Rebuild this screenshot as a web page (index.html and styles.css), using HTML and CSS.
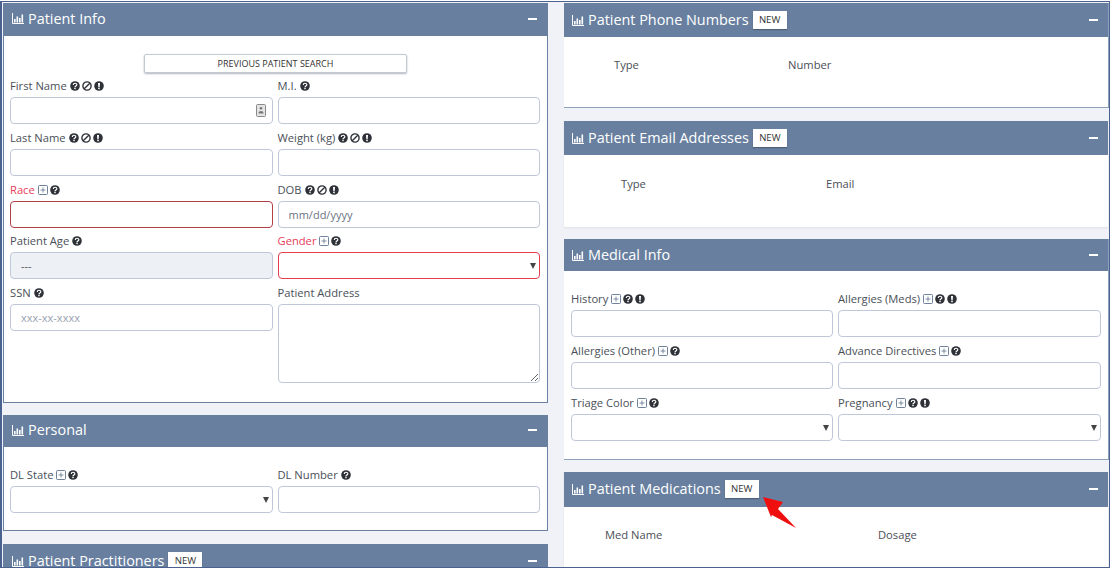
FILE: index.html
```html
<!DOCTYPE html>
<html lang="en">
<head>
<meta charset="utf-8">
<title>Patient</title>
<link rel="stylesheet" href="styles.css">
</head>
<body>
<svg class="defs" width="0" height="0" aria-hidden="true">
  <symbol id="i-chart" viewBox="0 0 12 11">
    <path d="M0.5 0v10.5H12" fill="none" stroke="currentColor"/>
    <path d="M2 6h1.6v3.5H2zM4.5 3.5h1.6v6H4.5zM7 5h1.6v4.5H7zM9.5 1.5h1.6v8H9.5z" fill="currentColor"/>
  </symbol>
  <symbol id="i-q" viewBox="0 0 10 10">
    <circle cx="5" cy="5" r="4.8" fill="currentColor"/>
    <path d="M3.3 3.9c0-2.2 3.5-2.2 3.5-.1 0 1.3-1.8 1.2-1.8 2.5" fill="none" stroke="#fff" stroke-width="1.2"/>
    <rect x="4.3" y="6.8" width="1.4" height="1.4" fill="#fff"/>
  </symbol>
  <symbol id="i-ban" viewBox="0 0 10 10">
    <circle cx="5" cy="5" r="4.1" fill="none" stroke="currentColor" stroke-width="1.4"/>
    <path d="M2.2 7.8 7.8 2.2" stroke="currentColor" stroke-width="1.4"/>
  </symbol>
  <symbol id="i-ex" viewBox="0 0 10 10">
    <circle cx="5" cy="5" r="4.8" fill="currentColor"/>
    <path d="M4 1.9h2L5.7 6H4.3z" fill="#fff"/>
    <rect x="4.2" y="6.6" width="1.6" height="1.6" fill="#fff"/>
  </symbol>
  <symbol id="i-plus" viewBox="0 0 10 10">
    <rect x="0.5" y="0.5" width="9" height="9" rx="1" fill="none" stroke="currentColor" stroke-width="0.9"/>
    <path d="M2.5 5h5M5 2.5v5" stroke="currentColor" stroke-width="0.8"/>
  </symbol>
</svg>

<div class="frame">
  <div class="columns">
    <div class="column">
      <section class="panel panel-boxed gap-12">
        <header class="panel-head head-33 head-lift">
          <svg class="chart"><use href="#i-chart"/></svg>
          <h2 class="panel-title">Patient Info</h2>
          <span class="collapse"></span>
        </header>
        <div class="panel-body body-info">
          <div class="btn-row"><button class="btn-prev" type="button">PREVIOUS PATIENT SEARCH</button></div>
          <div class="form-grid">
            <div class="field">
              <label class="field-label">First Name <svg class="ico"><use href="#i-q"/></svg><svg class="ico"><use href="#i-ban"/></svg><svg class="ico"><use href="#i-ex"/></svg></label>
              <div class="input-wrap">
                <input class="input" type="text">
                <svg class="contact" viewBox="0 0 10 13"><rect x="0.5" y="0.5" width="9" height="12" rx="1" fill="#e4e4e4" stroke="#8a8a8a"/><circle cx="5" cy="4.3" r="1.3" fill="#777"/><path d="M2.5 9.5c0-3.2 5-3.2 5 0z" fill="#777"/></svg>
              </div>
            </div>
            <div class="field">
              <label class="field-label">M.I. <svg class="ico"><use href="#i-q"/></svg></label>
              <input class="input" type="text">
            </div>
            <div class="field">
              <label class="field-label">Last Name <svg class="ico"><use href="#i-q"/></svg><svg class="ico"><use href="#i-ban"/></svg><svg class="ico"><use href="#i-ex"/></svg></label>
              <input class="input" type="text">
            </div>
            <div class="field">
              <label class="field-label">Weight (kg) <svg class="ico"><use href="#i-q"/></svg><svg class="ico"><use href="#i-ban"/></svg><svg class="ico"><use href="#i-ex"/></svg></label>
              <input class="input" type="text">
            </div>
            <div class="field">
              <label class="field-label label-req">Race <svg class="ico ico-plus"><use href="#i-plus"/></svg><svg class="ico"><use href="#i-q"/></svg></label>
              <input class="input input-err-dark" type="text">
            </div>
            <div class="field">
              <label class="field-label">DOB <svg class="ico"><use href="#i-q"/></svg><svg class="ico"><use href="#i-ban"/></svg><svg class="ico"><use href="#i-ex"/></svg></label>
              <input class="input input-date" type="text" value="mm/dd/yyyy">
            </div>
            <div class="field">
              <label class="field-label">Patient Age <svg class="ico"><use href="#i-q"/></svg></label>
              <input class="input input-off" type="text" value="---" disabled>
            </div>
            <div class="field">
              <label class="field-label label-req">Gender <svg class="ico ico-plus"><use href="#i-plus"/></svg><svg class="ico"><use href="#i-q"/></svg></label>
              <div class="select-wrap"><select class="input input-err"><option></option></select></div>
            </div>
            <div class="field">
              <label class="field-label">SSN <svg class="ico"><use href="#i-q"/></svg></label>
              <input class="input" type="text" placeholder="xxx-xx-xxxx">
            </div>
            <div class="field">
              <label class="field-label">Patient Address</label>
              <textarea class="input textarea"></textarea>
            </div>
          </div>
        </div>
      </section>

      <section class="panel panel-boxed gap-13">
        <header class="panel-head head-32 head-lift">
          <svg class="chart"><use href="#i-chart"/></svg>
          <h2 class="panel-title">Personal</h2>
          <span class="collapse"></span>
        </header>
        <div class="panel-body body-personal">
          <div class="form-grid">
            <div class="field">
              <label class="field-label">DL State <svg class="ico ico-plus"><use href="#i-plus"/></svg><svg class="ico"><use href="#i-q"/></svg></label>
              <div class="select-wrap"><select class="input"><option></option></select></div>
            </div>
            <div class="field">
              <label class="field-label">DL Number <svg class="ico"><use href="#i-q"/></svg></label>
              <input class="input" type="text">
            </div>
          </div>
        </div>
      </section>

      <section class="panel panel-boxed">
        <header class="panel-head head-34">
          <svg class="chart"><use href="#i-chart"/></svg>
          <h2 class="panel-title">Patient Practitioners</h2>
          <button class="btn-new" type="button">NEW</button>
          <span class="collapse"></span>
        </header>
      </section>
    </div>

    <div class="column column-right">
      <section class="panel panel-flat gap-13">
        <header class="panel-head head-34">
          <svg class="chart"><use href="#i-chart"/></svg>
          <h2 class="panel-title">Patient Phone Numbers</h2>
          <button class="btn-new" type="button">NEW</button>
          <span class="collapse"></span>
        </header>
        <div class="col-heads heads-phone">
          <span class="col-head">Type</span>
          <span class="col-head">Number</span>
        </div>
      </section>

      <section class="panel panel-plain gap-12">
        <header class="panel-head head-34">
          <svg class="chart"><use href="#i-chart"/></svg>
          <h2 class="panel-title">Patient Email Addresses</h2>
          <button class="btn-new" type="button">NEW</button>
          <span class="collapse"></span>
        </header>
        <div class="col-heads heads-email">
          <span class="col-head">Type</span>
          <span class="col-head">Email</span>
        </div>
      </section>

      <section class="panel panel-flat gap-12">
        <header class="panel-head head-32">
          <svg class="chart"><use href="#i-chart"/></svg>
          <h2 class="panel-title">Medical Info</h2>
          <span class="collapse"></span>
        </header>
        <div class="panel-body body-form">
          <div class="form-grid form-grid-right">
            <div class="field">
              <label class="field-label">History <svg class="ico ico-plus"><use href="#i-plus"/></svg><svg class="ico"><use href="#i-q"/></svg><svg class="ico"><use href="#i-ex"/></svg></label>
              <input class="input" type="text">
            </div>
            <div class="field">
              <label class="field-label">Allergies (Meds) <svg class="ico ico-plus"><use href="#i-plus"/></svg><svg class="ico"><use href="#i-q"/></svg><svg class="ico"><use href="#i-ex"/></svg></label>
              <input class="input" type="text">
            </div>
            <div class="field">
              <label class="field-label">Allergies (Other) <svg class="ico ico-plus"><use href="#i-plus"/></svg><svg class="ico"><use href="#i-q"/></svg></label>
              <input class="input" type="text">
            </div>
            <div class="field">
              <label class="field-label">Advance Directives <svg class="ico ico-plus"><use href="#i-plus"/></svg><svg class="ico"><use href="#i-q"/></svg></label>
              <input class="input" type="text">
            </div>
            <div class="field">
              <label class="field-label">Triage Color <svg class="ico ico-plus"><use href="#i-plus"/></svg><svg class="ico"><use href="#i-q"/></svg></label>
              <div class="select-wrap"><select class="input"><option></option></select></div>
            </div>
            <div class="field">
              <label class="field-label">Pregnancy <svg class="ico ico-plus"><use href="#i-plus"/></svg><svg class="ico"><use href="#i-q"/></svg><svg class="ico"><use href="#i-ex"/></svg></label>
              <div class="select-wrap"><select class="input"><option></option></select></div>
            </div>
          </div>
        </div>
      </section>

      <section class="panel panel-plain">
        <header class="panel-head head-35">
          <svg class="chart"><use href="#i-chart"/></svg>
          <h2 class="panel-title">Patient Medications</h2>
          <button class="btn-new" type="button">NEW</button>
          <span class="collapse"></span>
        </header>
        <div class="col-heads heads-med">
          <span class="col-head">Med Name</span>
          <span class="col-head">Dosage</span>
        </div>
      </section>
    </div>
  </div>

  <svg class="red-arrow" viewBox="0 0 34 32"><path d="M0 0 20 5 15 12 33 31 9 18 8 20z" fill="#f00f0f"/></svg>
</div>
</body>
</html>
```
FILE: styles.css
```css
* { box-sizing: border-box; }

html, body {
  margin: 0;
  padding: 0;
  background: #fff;
}

body {
  font-family: "Open Sans", "Liberation Sans", sans-serif;
  color: #444;
  overflow: hidden;
}

.defs { position: absolute; }

.frame {
  position: relative;
  width: 1110px;
  height: 567px;
  margin-top: 1px;
  padding: 1px 1px 0 1px;
  border: 1px solid #4a6290;
  border-left-width: 2px;
  background: #f1f2f7;
  overflow: hidden;
}

.columns {
  display: grid;
  grid-template-columns: 545px 544px;
  column-gap: 16px;
}

.panel { background: #fff; }
.panel-boxed { border: 1px solid #6a80a0; border-top: 0; }
.panel-flat { border-bottom: 1px solid #8fa2bd; box-shadow: 1px 0 0 #8fa2bd; }
.panel-plain { box-shadow: 0 1px 2px rgba(120, 130, 150, .15); }
.gap-12 { margin-bottom: 12px; }
.gap-13 { margin-bottom: 13px; }

.panel-head {
  display: flex;
  align-items: center;
  padding: 0 10px 0 8px;
  background: #687f9f;
  color: #fff;
}
.column-right .panel-head { padding-left: 8px; padding-right: 10px; }
.head-32 { height: 32px; }
.head-33 { height: 33px; }
.head-34 { height: 34px; }
.head-35 { height: 35px; }
.head-lift { padding-bottom: 2px; }

.chart {
  width: 12px;
  height: 11px;
  margin-right: 4px;
  flex: none;
  color: #fff;
}

.panel-title {
  margin: 0;
  font-size: 14.4px;
  font-weight: 400;
  line-height: 20px;
  color: #fff;
}

.btn-new {
  width: 34px;
  height: 18px;
  margin-left: 4px;
  padding: 0;
  border: 0;
  background: #fff;
  box-shadow: 0 1px 1px rgba(40, 50, 70, .4);
  font: 400 9.6px/18px "Open Sans", "Liberation Sans", sans-serif;
  color: #333;
}

.collapse {
  width: 9px;
  height: 2px;
  margin-left: auto;
  background: #fff;
}

.panel-body { background: #fff; }
.body-info { padding: 18px 7px 19px 6px; }
.body-form { padding: 20px 7px 18px 7px; }
.body-personal { padding: 20px 7px 17px 6px; }

.btn-row {
  display: flex;
  justify-content: center;
  height: 19px;
  margin-bottom: 5px;
  padding-left: 1px;
}

.btn-prev {
  width: 263px;
  height: 19px;
  padding: 0;
  border: 1px solid #c4cad4;
  border-radius: 2px;
  background: #fff;
  box-shadow: 0 1px 2px rgba(60, 70, 90, .4);
  font: 400 9px/17px "Open Sans", "Liberation Sans", sans-serif;
  color: #333;
}

.form-grid {
  display: grid;
  grid-template-columns: 1fr 1fr;
  column-gap: 5px;
  row-gap: 5.75px;
}
.form-grid-right { grid-template-columns: 262px 263px; }

.field { min-width: 0; }

.field-label {
  display: flex;
  align-items: center;
  gap: 2px;
  height: 16px;
  margin-bottom: 3px;
  font-size: 11.2px;
  line-height: 16px;
  color: #4a4f57;
  white-space: nowrap;
}
.label-req { color: #e5405a; }

.ico {
  width: 10px;
  height: 10px;
  flex: none;
  color: #2e3238;
}
.ico:first-of-type { margin-left: 1px; }
.ico-plus { color: #5f7390; }

.input {
  display: block;
  width: 100%;
  height: 27px;
  padding: 0 10px;
  border: 1px solid #bfc8d8;
  border-radius: 4px;
  background: #fff;
  font: 400 11px "Open Sans", "Liberation Sans", sans-serif;
  color: #5a6270;
  outline: 0;
  appearance: none;
}
.input::placeholder { color: #99a2b0; opacity: 1; }
.input-err-dark { border-color: #b04048; }
.input-err { border-color: #e33e50; }
.input-off { background: #edf0f5; color: #555; }
.input-date { color: #6b7482; }
.textarea { height: 79px; resize: both; }

.input-wrap, .select-wrap { position: relative; }

.contact {
  position: absolute;
  top: 7px;
  right: 7px;
  width: 10px;
  height: 13px;
}

.select-wrap::after {
  content: "";
  position: absolute;
  top: 11px;
  right: 4px;
  border-left: 3.5px solid transparent;
  border-right: 3.5px solid transparent;
  border-top: 6px solid #444;
  pointer-events: none;
}

.col-heads {
  display: flex;
  font-size: 11.2px;
  line-height: 16px;
  color: #4a4f57;
}
.heads-phone { height: 70px; padding: 20px 0 0 50px; }
.heads-email { height: 72px; padding: 21px 0 0 57px; }
.heads-med { height: 60px; padding: 20px 0 0 41px; }
.heads-phone .col-head:first-child { width: 174px; }
.heads-email .col-head:first-child { width: 205px; }
.heads-med .col-head:first-child { width: 273px; }

.red-arrow {
  position: absolute;
  left: 761px;
  top: 495px;
  width: 34px;
  height: 32px;
}
```
